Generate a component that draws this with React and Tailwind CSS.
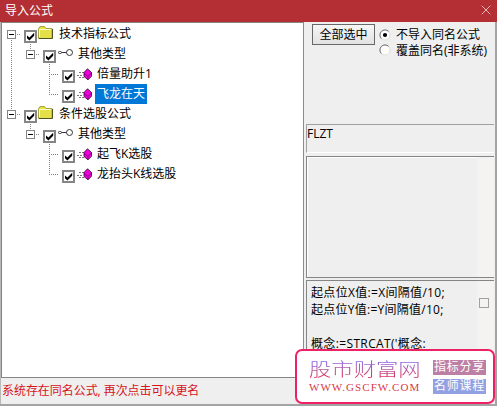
import React from "react";

const rows = [
  { level: 0, icon: "folder", text: "技术指标公式", first: true },
  { level: 1, icon: "type", text: "其他类型", trunk: true },
  { level: 2, icon: "item", text: "倍量助升1", trunk: true },
  { level: 2, icon: "item", text: "飞龙在天", trunk: true, last: true, selected: true },
  { level: 0, icon: "folder", text: "条件选股公式", end: true },
  { level: 1, icon: "type", text: "其他类型" },
  { level: 2, icon: "item", text: "起飞K选股" },
  { level: 2, icon: "item", text: "龙抬头K线选股", last: true },
];

function Guide({ d, box }) {
  return (
    <svg width="19" height="20" className="shrink-0" shapeRendering="crispEdges">
      <path d={d} fill="none" stroke="#848484" strokeDasharray="1 1" />
      {box && (
        <>
          <rect x="5.5" y="6.5" width="8" height="8" fill="white" stroke="#858585" />
          <path d="M7 10.5h5" stroke="black" />
        </>
      )}
    </svg>
  );
}

function Check() {
  return (
    <svg width="13" height="13" className="mt-[6px] ml-[3px] shrink-0">
      <rect x="1" y="1" width="11" height="11" fill="white" stroke="#858585" strokeWidth="2" />
      <path d="M3 5.4v2.9L5.4 10.5L10.2 5.7V2.8L5.4 7.5Z" fill="black" />
    </svg>
  );
}

function Icon({ kind }) {
  if (kind === "folder") {
    return (
      <svg width="16" height="14" className="mt-[2px] ml-[1px] shrink-0">
        <path d="M.5 3 2 .5h4.5L8 2.5h6v10H.5Z" fill="#e3e04a" stroke="#a6a33c" />
        <path d="M1.5 11V3.5H13" fill="none" stroke="#fffdc5" />
        <path d="M1 12.5h13.5V3" fill="none" stroke="#505022" />
      </svg>
    );
  }
  if (kind === "type") {
    return (
      <svg width="17" height="10" className="mt-[4px] ml-[1px] shrink-0">
        <path d="M5 4.5h5" stroke="#333" />
        <rect x="1.5" y="3.5" width="3" height="2" rx="1" fill="white" stroke="#333" />
        <circle cx="12.5" cy="4.5" r="3" fill="white" stroke="#333" />
      </svg>
    );
  }
  return (
    <svg width="17" height="13" className="mt-[4px] ml-[1px] shrink-0">
      <path d="M3 4.5h5M1 7.5h6M3 9.5h5" stroke="#777" strokeDasharray="2 1" />
      <path d="m11.5 .8 4 3.7v3.7l-3.5 3.6-4-3.3V4.5Z" fill="#ed00dc" stroke="#300030" strokeWidth=".8" />
      <path d="m8 5.5 4 3 3.5-4M12 8.5v3.3" fill="none" stroke="#740070" strokeWidth=".8" />
    </svg>
  );
}

function Row({ level, icon, text, first, end, trunk, last, selected }) {
  return (
    <div className="flex h-5">
      {level === 0 && <Guide box d={first ? "M9.5 10v10M9 10.5h10" : end ? "M9.5 0v10M9 10.5h10" : ""} />}
      {level > 0 && <Guide d={trunk ? "M9.5 0v20" : ""} />}
      {level === 1 && <Guide box d="M9.5 0v10M9 10.5h10" />}
      {level === 2 && <Guide d="" />}
      {level === 2 && <Guide d={last ? "M9.5 0v10M9 10.5h11" : "M9.5 0v20M9 10.5h11"} />}
      <Check />
      <Icon kind={icon} />
      <span
        className={
          selected
            ? "ml-[2px] h-5 bg-[#0078d7] px-[2px] leading-[19px] text-white"
            : icon === "folder"
              ? "ml-[4px] h-5 px-[1px] leading-[19px]"
              : icon === "type"
                ? "ml-[2px] h-5 px-[2px] leading-[19px]"
                : "ml-[1px] h-5 px-[3px] leading-[19px]"
        }
      >
        {text}
      </span>
    </div>
  );
}

function Radio({ checked }) {
  return (
    <svg width="12" height="12" className="shrink-0">
      <circle cx="6" cy="6" r="5" fill="white" stroke="#dedede" />
      <path d="M2.4 9.6A5 5 0 0 1 9.6 2.4" fill="none" stroke="#727272" />
      {checked && <circle cx="6" cy="6" r="2.1" fill="black" />}
    </svg>
  );
}

export default function App() {
  return (
    <div className="relative flex h-[406px] w-[497px] flex-col overflow-hidden bg-[#efefef] font-['Open_Sans','Noto_Sans_CJK_SC',sans-serif] text-[12px] whitespace-nowrap text-black">
      <header className="flex h-[22px] shrink-0 items-center justify-between bg-[#b42f33] pr-[6px] pl-[5px] text-white">
        <span className="leading-[20px]">导入公式</span>
        <svg width="10" height="10" className="mb-[3px]">
          <path d="m.7.7 8.6 8.6M9.3.7.7 9.3" stroke="#edc5c5" strokeWidth=".9" />
        </svg>
      </header>
      <div className="flex min-h-0 flex-1 border-r-2 border-b-2 border-[#a4a4a4]">
        <div className="flex w-[303px] shrink-0 flex-col border-l border-[#b8b8b8]">
          <div className="h-[356px] border border-r-0 border-[#858585] bg-white pt-[1px]">
            {rows.map((row, i) => (
              <Row key={i} {...row} />
            ))}
          </div>
          <div className="pl-[1px] leading-[25px] tracking-[-0.05px] text-[#d7141b]">系统存在同名公式, 再次点击可以更名</div>
        </div>
        <div className="flex min-w-0 flex-1 flex-col border-l border-[#8c8c8c] pr-[1px] pl-[2px]">
          <div className="flex h-[102px] shrink-0 pt-[2px] pl-[6px]">
            <button className="h-[21px] w-[63px] border border-[#686868] bg-linear-to-b from-[#f6f6f6] to-[#e2e2e2] leading-[18px]">全部选中</button>
            <div className="ml-[4px] pt-[3px]">
              <div className="flex h-[15px] items-center">
                <Radio checked />
                <span className="ml-[5px] leading-[15px]">不导入同名公式</span>
              </div>
              <div className="flex h-[15px] items-center">
                <Radio />
                <span className="ml-[5px] pt-[1px] leading-[15px]">覆盖同名(非系统)</span>
              </div>
            </div>
          </div>
          <div className="h-[29px] shrink-0 border border-r-0 border-t-[#a0a0a0] border-b-white border-l-[#a0a0a0] leading-[18px]">FLZT</div>
          <div className="mt-[3px] flex h-[122px] shrink-0 justify-end border border-r-0 border-[#858585] shadow-[inset_1px_1px_0_white]">
            <div className="w-[17px] bg-[#f4f3f2]" />
          </div>
          <div className="mt-[2px] flex min-h-0 flex-1 justify-between border-t border-l border-[#858585]">
            <div className="pt-[3px] pl-[4px] leading-[17px]">
              <div className="tracking-[0.32px]">起点位X值:=X间隔值/10;</div>
              <div className="tracking-[0.26px]">起点位Y值:=Y间隔值/10;</div>
              <div className="h-[17px]" />
              <div className="tracking-[0.36px]">概念:=STRCAT('概念:</div>
            </div>
            <div className="w-[17px] bg-[#f4f3f2] pt-[17px] pl-[2px]">
              <div className="h-[10px] w-[10px] border border-[#a0a0a0]" />
            </div>
          </div>
        </div>
      </div>
      <div className="absolute top-[349px] left-[295px] flex h-[55px] w-[200px] justify-between rounded-[7px] border-2 border-[#ee2066] bg-white pr-[7px] pl-[12px]">
        <div className="flex w-[114px] flex-col pt-[6px]">
          <div className="h-[22px] w-[90px] origin-left scale-x-[1.24] bg-linear-to-b from-[#8a5fe0] from-25% to-[#d93165] to-85% bg-clip-text font-['Noto_Sans_CJK_SC',sans-serif] text-[18px] leading-[22px] font-light text-transparent">股市财富网</div>
          <div className="mt-[1px] font-['Liberation_Serif',serif] text-[11px] leading-[14px] tracking-[1.05px] text-[#d63a4a]">WWW.GSCFW.COM</div>
        </div>
        <div className="flex w-[53px] flex-col gap-[4px] pt-[9px] text-center text-[12px] tracking-[0.7px] text-white">
          <div className="h-[15px] bg-[#bd80a4] leading-[14px]">指标分享</div>
          <div className="h-[15px] bg-[#91a1e2] leading-[14px]">名师课程</div>
        </div>
      </div>
    </div>
  );
}
